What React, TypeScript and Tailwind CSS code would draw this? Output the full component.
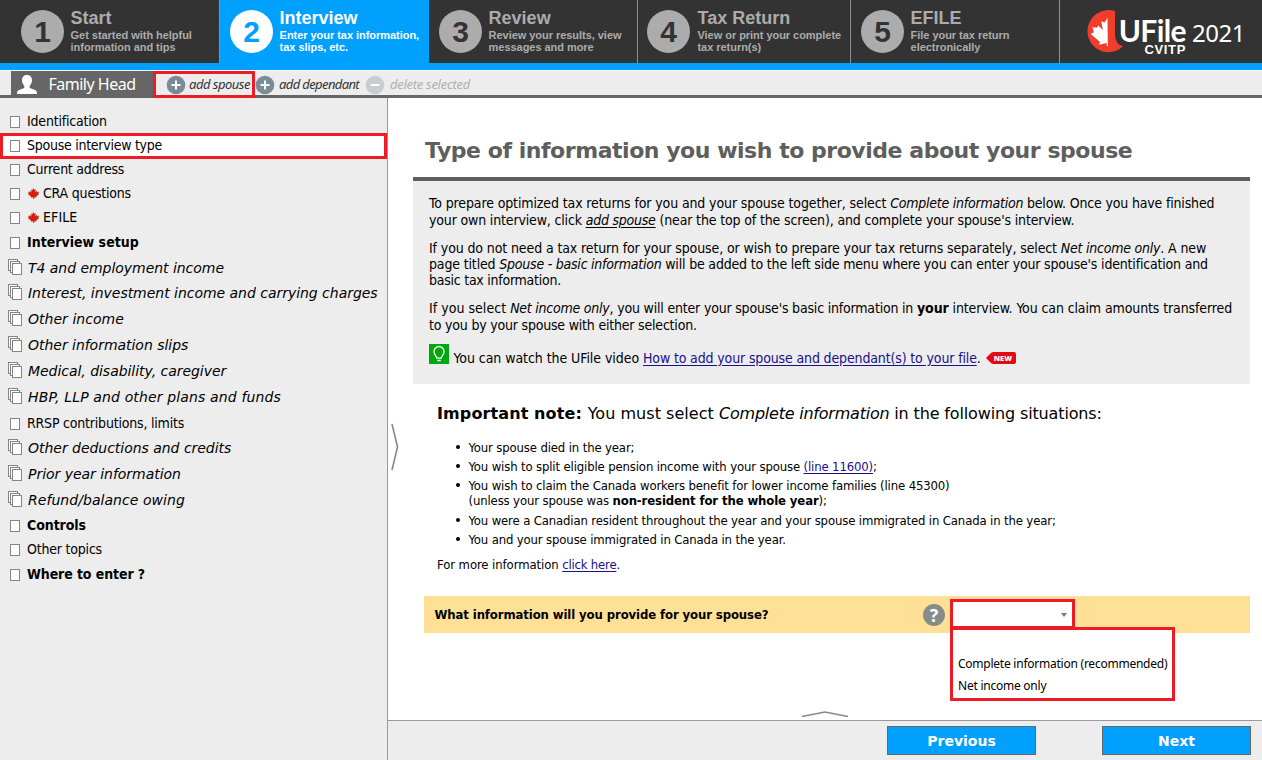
import type { ReactNode } from "react";

const steps = [
  { n: "1", title: "Start", a: "Get started with helpful", b: "information and tips", cls: "w-[220px] border-r pl-[21px] border-[#8a9197] bg-[#333] text-[#acacac]" },
  { n: "2", title: "Interview", a: "Enter your tax information,", b: "tax slips, etc.", cls: "w-[209px] pl-[10px] bg-[#00a0ff] text-white" },
  { n: "3", title: "Review", a: "Review your results, view", b: "messages and more", cls: "w-[209px] border-r pl-[10px] border-[#8a9197] bg-[#333] text-[#acacac]" },
  { n: "4", title: "Tax Return", a: "View or print your complete", b: "tax return(s)", cls: "w-[213px] border-r pl-[9px] border-[#8a9197] bg-[#333] text-[#acacac]" },
  { n: "5", title: "EFILE", a: "File your tax return", b: "electronically", cls: "w-[209px] border-r pl-[10px] border-[#8a9197] bg-[#333] text-[#acacac]" },
];

type Row = { t: string; k: "n" | "b" | "i"; h: string; tr: string; leaf?: boolean; active?: boolean };
const rows: Row[] = [
  { t: "Identification", k: "n", h: "h-6", tr: "tracking-[-0.19px]" },
  { t: "Spouse interview type", k: "n", h: "h-6", tr: "tracking-[-0.26px]", active: true },
  { t: "Current address", k: "n", h: "h-6", tr: "tracking-[-0.24px]" },
  { t: "CRA questions", k: "n", h: "h-6", tr: "tracking-[-0.2px]", leaf: true },
  { t: "EFILE", k: "n", h: "h-6", tr: "tracking-[0.1px]", leaf: true },
  { t: "Interview setup", k: "b", h: "h-[26px]", tr: "tracking-[0.01px]" },
  { t: "T4 and employment income", k: "i", h: "h-[26px]", tr: "tracking-[-0.04px]" },
  { t: "Interest, investment income and carrying charges", k: "i", h: "h-[25px]", tr: "tracking-[-0.03px]" },
  { t: "Other income", k: "i", h: "h-[26px]", tr: "tracking-[0.03px]" },
  { t: "Other information slips", k: "i", h: "h-[26px]", tr: "tracking-[-0.03px]" },
  { t: "Medical, disability, caregiver", k: "i", h: "h-[26px]", tr: "tracking-[-0.04px]" },
  { t: "HBP, LLP and other plans and funds", k: "i", h: "h-[26px]", tr: "tracking-[0.14px]" },
  { t: "RRSP contributions, limits", k: "n", h: "h-[26px]", tr: "tracking-[-0.2px]" },
  { t: "Other deductions and credits", k: "i", h: "h-[25px]", tr: "tracking-[-0.03px]" },
  { t: "Prior year information", k: "i", h: "h-[26px]", tr: "tracking-[-0.03px]" },
  { t: "Refund/balance owing", k: "i", h: "h-[26px]", tr: "tracking-[0.05px]" },
  { t: "Controls", k: "b", h: "h-6", tr: "tracking-[-0.07px]" },
  { t: "Other topics", k: "n", h: "h-6", tr: "tracking-[-0.2px]" },
  { t: "Where to enter ?", k: "b", h: "h-[26px]", tr: "tracking-[-0.1px]" },
];

const LEAF = "M12 1l-2 4-2.4-1 .9 6L5 7.500 4.300 9.200 1 8.700l1.300 3.600L.5 13.300 7 18.300l-.6 2 5.200-.8V24h.9v-4.500l5.200.8-.6-2 6.400-5-1.800-1 1.300-3.600-3.300.5L19 7.500l-3.500 2.500.9-6-2.400 1z";

function SmallLeaf() {
  return (
    <svg width="11" height="11" viewBox="0 0 24 24" className="mr-[4px] ml-px shrink-0">
      <path d={LEAF} fill="#d41f0a" stroke="#d41f0a" strokeWidth="1.2" />
    </svg>
  );
}

function Pages() {
  return (
    <svg width="14" height="16" viewBox="0 0 14 16" shapeRendering="crispEdges" className="mb-[3px] shrink-0" fill="#fff" stroke="#858585">
      <rect x=".5" y=".5" width="9" height="11" />
      <rect x="2.500" y="2.500" width="9" height="11" />
      <rect x="4.500" y="4.500" width="9" height="11" />
    </svg>
  );
}

function Round({ minus }: { minus?: boolean }) {
  return (
    <svg width="20" height="20" viewBox="0 0 20 20" className="shrink-0">
      <circle cx="10" cy="10" r="9.300" fill={minus ? "#c9cdd0" : "#7b8c99"} />
      <path d={minus ? "M5.500 10h9" : "M5.500 10h9M10 5.500v9"} stroke="#fff" strokeWidth="2" />
    </svg>
  );
}

function Logo() {
  return (
    <div className="flex items-start pt-[10px] pl-[27px] text-white">
      <svg width="37" height="43" viewBox="0 0 37 43" className="shrink-0">
        <path d="M28 1.200A21 21 0 1 0 36 36.300Q28.500 34.500 28 25z" fill="#ef3e2b" />
        <path d="M20.500 8l-3 4.500-3.200-1.300 1.500 8.800-4.600-4.500-1.200 2.300-4.600-.6 1.500 5-3.200 1.800 9.300 8-.8 2.700 7.500-1.700V36h1.100z" fill="#fff" />
      </svg>
      <div className="-ml-[6px] flex w-[68px] shrink-0 flex-col items-end">
        <span className="mt-[3px] font-['Lato'] text-[30px] leading-[34px] font-bold tracking-[-0.6px]">UFile</span>
        <span className="-mt-[4px] font-['Liberation_Sans'] text-[13px] leading-[14px] font-bold tracking-[0.65px]">CVITP</span>
      </div>
      <span className="ml-[6px] font-['Noto_Sans'] text-[24px] leading-[46px] tracking-[-0.5px]">2021</span>
    </div>
  );
}

function Line({ children, h = "h-[17px]" }: { children: ReactNode; h?: string }) {
  return <div className={`${h} leading-[17px] whitespace-pre`}>{children}</div>;
}

const I = ({ children }: { children: ReactNode }) => <i className="tracking-[-0.23px]">{children}</i>;
const link = "text-[#1a0f8c] underline underline-offset-2";

function Bullet({ children, h = "h-[19px]" }: { children: ReactNode; h?: string }) {
  return (
    <li className={`flex ${h}`}>
      <span className="mt-[7px] mr-[8.5px] size-[4px] rounded-full bg-black" />
      <div className="leading-[19px] whitespace-pre">{children}</div>
    </li>
  );
}

export default function App() {
  return (
    <div className="flex h-[760px] w-[1262px] flex-col overflow-hidden bg-white font-['DejaVu_Sans_Condensed',sans-serif] text-black">
      <header className="flex h-[63px] shrink-0 bg-[#333] font-['Liberation_Sans']">
        {steps.map((s) => (
          <div key={s.n} className={`flex shrink-0 pt-[9px] ${s.cls}`}>
            <div className={`mt-px flex size-[43px] shrink-0 items-center justify-center rounded-full text-[30px] leading-none font-bold ${s.n === "2" ? "bg-white text-[#00a0ff]" : "bg-[#acacac] text-[#333]"}`}>{s.n}</div>
            <div className={`whitespace-nowrap ${s.n === "4" ? "ml-[7.5px]" : "ml-[6.6px]"}`}>
              <div className="h-5 text-[18px] leading-[19px] font-bold">{s.title}</div>
              <div className="text-[11px] leading-3 font-bold tracking-[-0.04px]">{s.a}</div>
              <div className="text-[11px] leading-3 font-bold tracking-[-0.04px]">{s.b}</div>
            </div>
          </div>
        ))}
        <Logo />
      </header>
      <div className="h-[7px] shrink-0 bg-[#00a0ff]" />

      <div className="relative mt-px flex h-[27px] shrink-0 items-center border-b-3 border-[#666] bg-[#ededed] pl-[11px] font-['Noto_Sans'] text-[13px] text-[#333] italic">
        <div className="flex h-full w-[142px] items-center bg-[#666] pl-[6px] text-[16px] text-white not-italic">
          <svg width="20" height="20" viewBox="0 0 20 20" className="mt-[3px]">
            <path d="M10 0c3.300 0 5 2 5 5.300 0 2.700-1.200 4.300-2.300 5.700v2l5.300 2c1.500.6 2 1.600 2 4H0c0-2.400.5-3.400 2-4l5.300-2v-2C6.200 9.600 5 8 5 5.300 5 2 6.700 0 10 0z" fill="#fff" />
          </svg>
          <span className="ml-[11.5px] pt-[2px] tracking-[-0.5px] whitespace-nowrap">Family Head</span>
        </div>
        <div className="ml-[13px] flex items-center pt-[3px]">
          <Round />
          <span className="ml-[3px] w-[66px] tracking-[-0.5px] whitespace-nowrap">add spouse</span>
          <Round />
          <span className="ml-[4px] w-[86px] tracking-[-0.62px] whitespace-nowrap">add dependant</span>
          <Round minus />
          <span className="ml-[5px] tracking-[-0.28px] whitespace-nowrap text-[#b0b0b0]">delete selected</span>
        </div>
        <div className="absolute top-0 left-[153px] h-[27px] w-[102px] border-3 border-[#ed1c24]" />
      </div>

      <div className="flex min-h-0 flex-1">
        <nav className="w-[388px] shrink-0 border-r border-[#969a9e] bg-[#ededed] pt-[11px] whitespace-nowrap">
          {rows.map((r) => (
            <div key={r.t} className={`relative flex items-center ${r.h} ${r.k === "i" ? "pl-2" : "pl-[10px]"}`}>
              {r.active && <div className="absolute top-0 left-0 h-[26px] w-[387px] border-3 border-[#ed1c24] bg-white" />}
              {r.k === "i" ? <Pages /> : <span className="relative mt-[2px] h-3 w-[10px] shrink-0 border border-[#858585] bg-white" />}
              <span className={`relative flex items-center ${r.tr} ${r.k === "i" ? "ml-[6px] font-['DejaVu_Sans'] text-[14px] italic" : r.k === "b" ? "ml-[7px] text-[14px] font-bold" : "ml-[7px] text-[14px]"}`}>
                {r.leaf && <SmallLeaf />}
                {r.t}
              </span>
            </div>
          ))}
        </nav>

        <div className="flex min-w-0 flex-1 flex-col">
          <main className="relative h-[622px] shrink-0 pl-[25px]">
            <h1 className="h-[79px] pt-[34px] pl-[12px] font-['DejaVu_Sans'] text-[22px] leading-[38px] font-bold tracking-[-0.46px] whitespace-nowrap text-[#5e5e5e]">Type of information you wish to provide about your spouse</h1>
            <section className="h-[207px] w-[837px] border-t-4 border-[#5e5e5e] bg-[#ededed] pt-[14px] pl-4 text-[14px]">
              <div className="h-[45px]">
                <Line><span className="tracking-[-0.12px]">To prepare optimized tax returns for you and your spouse together, select </span><I>Complete information </I><span className="tracking-[-0.17px]">below. Once you have finished</span></Line>
                <Line><span className="tracking-[-0.16px]">your own interview, click </span><i className="tracking-[-0.23px] underline underline-offset-2">add spouse</i><span className="tracking-[-0.15px]"> (near the top of the screen), and complete your spouse's interview.</span></Line>
              </div>
              <div className="h-[60px]">
                <Line h="h-4"><span className="tracking-[-0.115px]">If you do not need a tax return for your spouse, or wish to prepare your tax returns separately, select </span><I>Net income only</I><span className="tracking-[-0.1px]">. A new</span></Line>
                <Line h="h-4"><span className="tracking-[-0.15px]">page titled </span><I>Spouse - basic information </I><span className="tracking-[-0.18px]">will be added to the left side menu where you can enter your spouse's identification and</span></Line>
                <Line><span className="tracking-[-0.25px]">basic tax information.</span></Line>
              </div>
              <div className="h-[44px]">
                <Line><span className="tracking-[0.03px]">If you select </span><I>Net income only</I><span className="tracking-[-0.19px]">, you will enter your spouse's basic information in </span><b className="tracking-[-0.1px]">your</b><span className="tracking-[-0.11px]"> interview. You can claim amounts transferred</span></Line>
                <Line><span className="tracking-[-0.2px]">to you by your spouse with either selection.</span></Line>
              </div>
              <div className="flex items-start whitespace-pre">
                <svg width="20" height="20" viewBox="0 0 20 20" className="mr-[4.5px]">
                  <rect width="20" height="20" fill="#00a80f" />
                  <path d="M7.800 14.200c0-2.200-2.800-3.500-2.800-6.700a5 5 0 0 1 10 0c0 3.200-2.800 4.500-2.800 6.700zM8.300 16.500h3.400" fill="none" stroke="#fff" strokeWidth="1.300" />
                </svg>
                <div className="pt-[6px] leading-[17px]"><span className="tracking-[-0.06px]">You can watch the UFile video </span><span className={`${link} tracking-[-0.14px]`}>How to add your spouse and dependant(s) to your file</span>.</div>
                <div className="relative mt-[8px] ml-[5px] h-3 w-[30px]">
                  <svg width="30" height="12" viewBox="0 0 30 12" className="block"><path d="M0 6l5-5q1-1 2.500-1H28q2 0 2 2v8q0 2-2 2H7.500Q6 12 5 11z" fill="#e30b13" /></svg>
                  <span className="absolute top-0 left-[8px] font-['Open_Sans'] text-[7.5px] leading-3 font-extrabold text-white">NEW</span>
                </div>
              </div>
            </section>

            <section className="h-[212px] pt-[20px] pl-[24px] text-[13px]">
              <div className="h-[34px] font-['DejaVu_Sans'] text-[16px] leading-[20px] whitespace-pre"><b className="tracking-[0.11px]">Important note: </b><span className="tracking-[0.04px]">You must select </span><i className="tracking-[-0.22px]">Complete information </i><span className="tracking-[-0.14px]">in the following situations:</span></div>
              <ul className="h-[117px] pl-[19px] tracking-[-0.14px]">
                <Bullet>Your spouse died in the year;</Bullet>
                <Bullet>You wish to split eligible pension income with your spouse <span className={link}>(line 11600)</span>;</Bullet>
                <Bullet h="h-[35px]"><div className="h-[15px]">You wish to claim the Canada workers benefit for lower income families (line 45300)</div><div>(unless your spouse was <b className="tracking-[-0.12px]">non-resident for the whole year</b>);</div></Bullet>
                <Bullet>You were a Canadian resident throughout the year and your spouse immigrated in Canada in the year;</Bullet>
                <Bullet>You and your spouse immigrated in Canada in the year.</Bullet>
              </ul>
              <div className="leading-[19px] tracking-[-0.09px]">For more information <span className={`${link} tracking-[-0.2px]`}>click here</span>.</div>
            </section>

            <div className="ml-[11px] flex h-[37px] w-[826px] items-center bg-[#ffe096]">
              <span className="w-[499px] pt-px pl-[10.5px] text-[13px] font-bold tracking-[-0.11px]">What information will you provide for your spouse?</span>
              <span className="flex size-[22px] items-center justify-center rounded-full bg-[#868d88] font-['Open_Sans'] text-[18px] leading-none font-bold text-white">?</span>
              <div className="relative mb-px ml-[5px] flex h-[30px] w-[125px] items-center justify-end border-3 border-[#ed1c24] bg-white pr-[5px]">
                <svg width="6" height="4" viewBox="0 0 6 4" className="mt-[2px]"><path d="M0 0h6L3 4z" fill="#777" /></svg>
                <div className="absolute top-[25px] left-[-3px] h-[74px] w-[225px] border-3 border-[#ed1c24] bg-white pt-[23px] pl-[5px] font-['Noto_Sans'] text-[12px] leading-[22px] tracking-[-0.24px] whitespace-nowrap">
                  <div>Complete information (recommended)</div>
                  <div>Net income only</div>
                </div>
              </div>
            </div>

            <svg width="8" height="48" viewBox="0 0 8 48" className="absolute top-[325px] left-[3px]"><path d="M1 1l5.500 23L1 47" fill="none" stroke="#888" strokeWidth="1.600" /></svg>
            <svg width="48" height="7" viewBox="0 0 48 7" className="absolute top-[613px] left-[413px]"><path d="M1 5.500L24 1l23 4.500" fill="none" stroke="#888" strokeWidth="1.500" /></svg>
          </main>
          <footer className="flex flex-1 justify-end gap-[66px] border-t border-[#969a9e] bg-[#ededed] pt-[5px] pr-[11px] font-['DejaVu_Sans'] text-[14px] leading-[29px] font-bold text-white">
            <button className="h-[29px] w-[149px] border border-[#666] bg-[#00a0ff]">Previous</button>
            <button className="h-[29px] w-[149px] border border-[#666] bg-[#00a0ff]">Next</button>
          </footer>
        </div>
      </div>
    </div>
  );
}
